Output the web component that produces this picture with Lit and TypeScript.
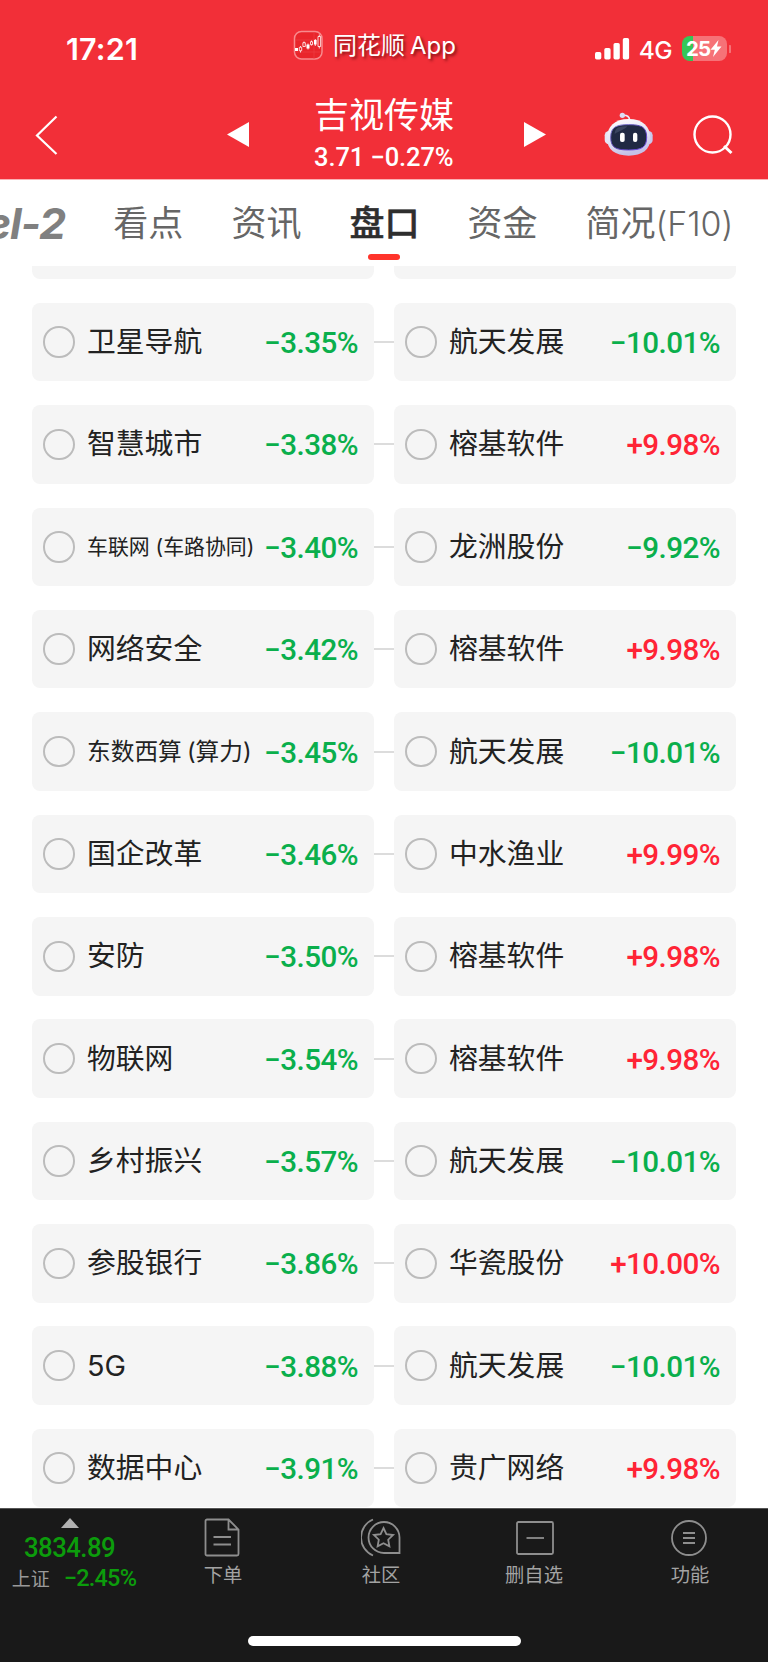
import { LitElement, html, css, svg } from "lit";
import { customElement, property } from "lit/decorators.js";
import { classMap } from "lit/directives/class-map.js";

type Size = "normal" | "medium" | "small";
interface Entry {
  name: string;
  change: string;
  size?: Size;
}

const ROWS: [Entry, Entry][] = [
  [{ name: "卫星导航", change: "−3.35%" }, { name: "航天发展", change: "−10.01%" }],
  [{ name: "智慧城市", change: "−3.38%" }, { name: "榕基软件", change: "+9.98%" }],
  [{ name: "车联网 (车路协同)", change: "−3.40%", size: "small" }, { name: "龙洲股份", change: "−9.92%" }],
  [{ name: "网络安全", change: "−3.42%" }, { name: "榕基软件", change: "+9.98%" }],
  [{ name: "东数西算 (算力)", change: "−3.45%", size: "medium" }, { name: "航天发展", change: "−10.01%" }],
  [{ name: "国企改革", change: "−3.46%" }, { name: "中水渔业", change: "+9.99%" }],
  [{ name: "安防", change: "−3.50%" }, { name: "榕基软件", change: "+9.98%" }],
  [{ name: "物联网", change: "−3.54%" }, { name: "榕基软件", change: "+9.98%" }],
  [{ name: "乡村振兴", change: "−3.57%" }, { name: "航天发展", change: "−10.01%" }],
  [{ name: "参股银行", change: "−3.86%" }, { name: "华瓷股份", change: "+10.00%" }],
  [{ name: "5G", change: "−3.88%" }, { name: "航天发展", change: "−10.01%" }],
  [{ name: "数据中心", change: "−3.91%" }, { name: "贵广网络", change: "+9.98%" }],
];

const TABS: { label: string; code?: string; active?: boolean }[] = [
  { label: "看点" },
  { label: "资讯" },
  { label: "盘口", active: true },
  { label: "资金" },
  { label: "简况", code: "(F10)" },
];

@customElement("status-bar")
class StatusBar extends LitElement {
  static styles = css`
    :host { display: grid; grid-template-columns: 293px 1fr auto; height: 98px; align-items: start; }
    .time { font: 600 30.5px/36px Inter, sans-serif; padding: 31px 0 0 66px; letter-spacing: 0.2px; }
    .app { display: flex; align-items: center; gap: 9px; padding-top: 28px; }
    .app-name { font: 400 24px/32px "Noto Sans CJK SC", sans-serif; text-shadow: 2px 2px 3px rgba(70, 0, 0, 0.65); white-space: nowrap; }
    .latin { font-family: Inter, sans-serif; margin-left: 5px; }
    .right { display: flex; align-items: center; padding: 36px 37px 0 0; height: 25px; }
    .net { font: 500 24.5px/25px Inter, sans-serif; margin: 3px 10px 0 9px; letter-spacing: -0.6px; }
    .battery { position: relative; display: flex; align-items: center; width: 45px; height: 25px; border-radius: 8px;
      background: linear-gradient(90deg, #35c759 0 11px, #f67277 11px); }
    .level { font: 700 20.5px/25px Inter, sans-serif; padding-left: 4px; letter-spacing: -0.8px; }
    .nub { margin-left: 2px; }
    svg { display: block; }
  `;
  render() {
    return html`
      <div class="time">17:21</div>
      <div class="app">
        <svg width="31" height="31" viewBox="0 0 31 31">
          <rect x="1.5" y="1.5" width="27.5" height="27.5" rx="7" fill="#e9252b" stroke="#f88a8d" stroke-width="1.5" />
          <path d="M2 10h26M2 22h26M21 2v27" stroke="#ee4046" stroke-width=".6" />
          <path d="M2 18h3v3H2zM13.500 14.500h3v4h-3zM21 10h2.600v4.500H21z" fill="#fff" />
          <path d="M15 13.500v6M22.300 9v7M7.500 16v1m0 4v1.500M11 11.500v1.500M18.500 10.500v1.500m0 2.500v1M26.300 4.500v2m0 10v2" stroke="#fff" stroke-width=".8" />
          <path d="M6.300 17.300h2.400v3.400H6.300zM9.900 12.700h2.400v3.800H9.900zM17.500 11.700h2v3h-2zM25 6.500h2.600v10H25z" fill="none" stroke="#fff" stroke-width=".8" />
        </svg>
        <div class="app-name">同花顺<span class="latin">App</span></div>
      </div>
      <div class="right">
        <svg width="35" height="23" viewBox="0 0 35 23">
          <g fill="#fff"><rect x="0" y="15" width="6.300" height="7.500" rx="1.700" /><rect x="9.300" y="11" width="6.300" height="11.500" rx="1.700" /><rect x="18.500" y="6" width="6.300" height="16.500" rx="1.700" /><rect x="27.800" y="1" width="6.300" height="21.500" rx="1.700" /></g>
        </svg>
        <span class="net">4G</span>
        <div class="battery">
          <span class="level">25</span>
          <svg width="12" height="17" viewBox="0 0 12 17"><path d="M8.500 0 .5 9.800h4.300L3 17l8.500-10.400H7z" fill="#fff" /></svg>
        </div>
        <svg class="nub" width="2" height="8" viewBox="0 0 2 8"><path d="M0 0a4 4 0 0 1 0 8z" fill="#f67277" /></svg>
      </div>
    `;
  }
}

@customElement("stock-header")
class StockHeader extends LitElement {
  static styles = css`
    :host { display: flex; height: 82px; box-sizing: border-box; border-bottom: 1px solid #fbb2b4; }
    svg { display: block; flex: none; }
    .back { margin: 17px 0 0 35px; }
    .prev { margin: 23px 0 0 168px; }
    .title { width: 162px; margin-left: 64px; white-space: nowrap; }
    .name { font: 400 35px/34px "Noto Sans CJK SC", sans-serif; margin-top: -2px; }
    .price { font: 500 25.5px/26px Roboto, sans-serif; margin-top: 14px; letter-spacing: -0.1px; }
    .next { margin: 23px 0 0 48px; }
    .robot { margin: 12px 0 0 56px; }
    .search { margin: 17px 0 0 38px; }
  `;
  render() {
    return html`
      <svg class="back" width="24" height="41" viewBox="0 0 24 41"><path d="M21.500 1.500 2 20.500l19.500 18.500" fill="none" stroke="#fff" stroke-width="2.200" /></svg>
      <svg class="prev" width="23" height="27" viewBox="0 0 23 27"><path d="M22 1v25L0 13.500z" fill="#fff" /></svg>
      <div class="title">
        <div class="name">吉视传媒</div>
        <div class="price">3.71 −0.27%</div>
      </div>
      <svg class="next" width="23" height="27" viewBox="0 0 23 27"><path d="M0 1v25l22-12.500z" fill="#fff" /></svg>
      <svg class="robot" width="51.700" height="48.300" viewBox="655 330 155 145">
        <defs>
          <linearGradient id="head" x1="0" y1="0" x2="0.300" y2="1"><stop offset="0" stop-color="#fff" /><stop offset=".6" stop-color="#e3e2f5" /><stop offset="1" stop-color="#c5c1e8" /></linearGradient>
          <linearGradient id="rim" x1="0" y1="0" x2="1" y2="1"><stop offset="0" stop-color="#8d8fdc" /><stop offset=".5" stop-color="#4d37a8" /><stop offset="1" stop-color="#7a55f0" /></linearGradient>
        </defs>
        <path d="M713 346q20-2 22 14" fill="none" stroke="#eceafa" stroke-width="5" />
        <circle cx="713" cy="346" r="8" fill="#dcdcf4" />
        <rect x="660" y="393" width="30" height="40" rx="13" fill="#e6e5f6" />
        <rect x="774" y="393" width="30" height="40" rx="13" fill="#c8c8ee" />
        <path d="M732 357c42 0 65 22 65 58 0 34-24 52-65 52s-65-18-65-52c0-36 23-58 65-58z" fill="url(#head)" />
        <path d="M732 374c36 0 54 6 54 38 0 31-16 38-54 38s-54-7-54-38c0-32 18-38 54-38z" fill="#202943" stroke="url(#rim)" stroke-width="3" />
        <path d="M690 402c0-20 15-23 38-23-8 10-24 14-38 23z" fill="#3a445f" />
        <rect x="706" y="398" width="14" height="28" rx="6" fill="#fff" /><rect x="745" y="398" width="13" height="28" rx="6" fill="#fff" />
      </svg>
      <svg class="search" width="42" height="42" viewBox="0 0 42 42"><g fill="none" stroke="#fff" stroke-width="2.400"><circle cx="19.500" cy="19.500" r="18" /><path d="m31 31 7.500 7" stroke-width="3" /></g></svg>
    `;
  }
}

@customElement("tab-strip")
class TabStrip extends LitElement {
  static styles = css`
    :host { display: flex; height: 86px; overflow: hidden; background: #fff; color: #666; }
    .level { width: 65px; flex: none; display: flex; justify-content: flex-end; margin-right: 48px; white-space: nowrap;
      font: italic 700 43px/86px Inter, sans-serif; letter-spacing: -1px; color: #808080; }
    .tab { display: flex; flex-direction: column; align-items: center; width: 70.600px; margin-right: 47.500px; flex: none;
      font: 400 35px/50px "Noto Sans CJK SC", sans-serif; padding-top: 16px; white-space: nowrap; }
    .wide { width: auto; margin: 0; }
    .code { font-family: Inter, sans-serif; font-weight: 300; font-size: 34px; }
    .active { color: #2e2e2e; font-weight: 500; -webkit-text-stroke: 0.5px #2e2e2e; }
    .bar { width: 32px; height: 6px; border-radius: 3px; background: #ff342b; margin-top: 8px; }
  `;
  render() {
    return html`
      <div class="level"><span>Level-2</span></div>
      ${TABS.map((t) => html`<div class=${classMap({ tab: true, active: !!t.active, wide: !!t.code })}>
        <span>${t.label}${t.code ? html`<span class="code">${t.code}</span>` : ""}</span>${t.active ? html`<i class="bar"></i>` : ""}
      </div>`)}
    `;
  }
}

@customElement("link-card")
class LinkCard extends LitElement {
  @property({ attribute: false }) entry!: Entry;
  static styles = css`
    :host { display: flex; align-items: center; height: 78.500px; border-radius: 8px; background: #f5f5f5; box-sizing: border-box; padding: 0 16px 0 11px; }
    .ring { width: 31.500px; height: 31.500px; box-sizing: border-box; border: 2px solid #bcbcbc; border-radius: 50%; flex: none; }
    .name { flex: 1; margin: 0 0 0 12.500px; color: #222; font: 400 28.800px/40px Inter, "Noto Sans CJK SC", sans-serif; white-space: nowrap; }
    .medium { font-size: 23.700px; word-spacing: -1.500px; }
    .small { font-size: 20.900px; }
    .change { font: 500 29.600px/40px Roboto, sans-serif; color: #0aaf4c; letter-spacing: -0.55px; white-space: nowrap; margin-top: 2px; }
    .up { color: #ff2436; }
  `;
  render() {
    const { name, change, size } = this.entry;
    return html`
      <span class="ring"></span>
      <span class=${classMap({ name: true, medium: size === "medium", small: size === "small" })}>${name}</span>
      <span class=${classMap({ change: true, up: change.startsWith("+") })}>${change}</span>
    `;
  }
}

const ICONS = {
  order: svg`<path d="M3 1.500h21.500l10 10V36a1.500 1.500 0 0 1-1.500 1.500H3A1.500 1.500 0 0 1 1.500 36V3A1.500 1.500 0 0 1 3 1.500zM24.500 1.500v10h10M9.500 19H27M9.500 26.500H27" />`,
  community: svg`<path d="M12 1.500a19.500 19.500 0 0 0 0 36M23 4a15.500 15.500 0 1 0 0 31h15.500V19.500A15.500 15.500 0 0 0 23 4z" /><path d="m22.500 10 2.900 6.100 6.700.9-4.900 4.700 1.200 6.700-5.900-3.200-5.900 3.200 1.200-6.700-4.900-4.700 6.700-.9z" />`,
  remove: svg`<rect x="3" y="4" width="36" height="32" rx="1.500" /><path d="M12.500 20H30" />`,
  more: svg`<circle cx="19" cy="20" r="17" /><path d="M13 15h12M13 20h12M13 25h12" />`,
};

@customElement("bottom-bar")
class BottomBar extends LitElement {
  static styles = css`
    :host { display: flex; flex-direction: column; height: 154px; box-sizing: border-box; background: #191919; border-top: 1px solid #555; }
    .items { display: flex; height: 126px; }
    .index { width: 139px; display: flex; flex-direction: column; align-items: center; padding-top: 9px; box-sizing: border-box; }
    .value { font: 500 28px/28px Roboto, sans-serif; color: #0c9c0c; letter-spacing: -0.6px; margin-top: 6px; transform: scaleX(0.92); }
    .line { display: flex; gap: 14px; align-items: center; margin: 4px 0 0 9px; white-space: nowrap; }
    .market { font: 400 19px/26px "Noto Sans CJK SC", sans-serif; color: #999; margin-top: -1px; }
    .pct { font: 500 23.500px/26px Roboto, sans-serif; color: #0c9c0c; letter-spacing: -0.8px; margin-top: -1px; }
    .item { display: flex; flex-direction: column; align-items: center; flex: none; width: 156px; padding-top: 9px; box-sizing: border-box;
      font: 400 19.300px/28px "Noto Sans CJK SC", sans-serif; color: #a3a3a3; }
    .item:nth-child(2) { width: 168px; }
    .item:nth-child(3) { width: 148px; }
    .item:nth-child(4) { width: 158px; }
    .item:nth-child(5) { width: 154px; }
    .item svg { margin-bottom: 2px; }
    .item:nth-child(2) svg { margin-right: 2px; }
    svg { display: block; fill: none; stroke: #8e8e8e; stroke-width: 1.800; }
    .home { width: 273px; height: 10px; border-radius: 5px; background: #fff; align-self: center; margin-top: 1px; }
  `;
  render() {
    const item = (icon: unknown, label: string, w = 40) => html`<div class="item"><svg width=${w} height="40" viewBox="0 0 ${w} 40">${icon}</svg><span>${label}</span></div>`;
    return html`
      <div class="items">
        <div class="index">
          <svg width="18" height="10" viewBox="0 0 18 10"><path d="M9 0l9 10H0z" fill="#b2b2b2" stroke="none" /></svg>
          <div class="value">3834.89</div>
          <div class="line"><span class="market">上证</span><span class="pct">−2.45%</span></div>
        </div>
        ${item(ICONS.order, "下单", 36)}${item(ICONS.community, "社区")}${item(ICONS.remove, "删自选")}${item(ICONS.more, "功能")}
      </div>
      <div class="home"></div>
    `;
  }
}

@customElement("app-root")
class AppRoot extends LitElement {
  static styles = css`
    :host { display: flex; flex-direction: column; width: 768px; height: 1663px; overflow: hidden; background: #fff; }
    .top { background: #f22f38; color: #fff; }
    .list { height: 1242px; overflow: hidden; display: flex; flex-direction: column; }
    .row { display: grid; grid-template-columns: 342px 20px 342px; align-items: center; margin: 0 32px 23.860px; flex: none; }
    .cut { height: 13px; background: #f5f5f5; border-radius: 0 0 8px 8px; }
    .link { height: 2px; background: #dcdcdc; }
  `;
  render() {
    return html`
      <div class="top"><status-bar></status-bar><stock-header></stock-header></div>
      <tab-strip></tab-strip>
      <div class="list">
        <div class="row"><div class="cut"></div><span></span><div class="cut"></div></div>
        ${ROWS.map(([a, b]) => html`<div class="row"><link-card .entry=${a}></link-card><div class="link"></div><link-card .entry=${b}></link-card></div>`)}
      </div>
      <bottom-bar></bottom-bar>
    `;
  }
}
